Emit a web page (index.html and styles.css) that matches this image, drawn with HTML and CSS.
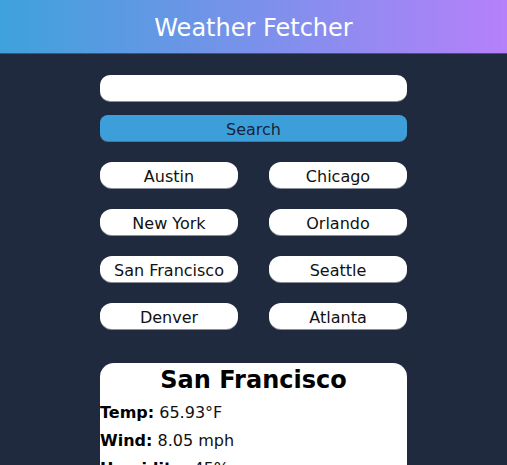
FILE: index.html
```html
<!DOCTYPE html>
<html>
<head>
<meta charset="utf-8">
<link rel="stylesheet" href="styles.css">
</head>
<body>
<header class="top">Weather Fetcher</header>
<main class="col">
  <input class="search-input" type="text">
  <button class="search-btn">Search</button>
  <div class="cities">
    <button class="city">Austin</button>
    <button class="city">Chicago</button>
    <button class="city">New York</button>
    <button class="city">Orlando</button>
    <button class="city">San Francisco</button>
    <button class="city">Seattle</button>
    <button class="city">Denver</button>
    <button class="city">Atlanta</button>
  </div>
  <section class="card">
    <h2 class="card-title">San Francisco</h2>
    <p class="row"><b>Temp:</b> 65.93°F</p>
    <p class="row"><b>Wind:</b> 8.05 mph</p>
    <p class="row"><b>Humidity:</b> 45%</p>
  </section>
</main>
</body>
</html>
```
FILE: styles.css
```css
html, body { margin: 0; padding: 0; }
body {
  background: #1f2a3e;
  font-family: "DejaVu Sans", Verdana, sans-serif;
  overflow: hidden;
}
.top {
  box-sizing: border-box;
  height: 54px;
  padding-top: 2px;
  display: flex;
  align-items: center;
  justify-content: center;
  color: #fff;
  font-size: 24px;
  background: linear-gradient(to right, #3ea2db, #b680fa);
  border-bottom: 1px solid #3b5878;
}
.col {
  width: 307px;
  margin: 21px auto 0;
  display: flex;
  flex-direction: column;
}
.search-input {
  box-sizing: border-box;
  height: 26px;
  border: none;
  border-radius: 10px;
  background: #fff;
  box-shadow: 0 1px 0 #8a8f99;
  margin: 0;
}
.search-btn {
  box-sizing: border-box;
  height: 26px;
  margin-top: 14px;
  border: none;
  border-radius: 8px;
  background: #3d9fda;
  color: #17243a;
  font-family: inherit;
  font-size: 16px;
  padding: 2px 0 0;
  box-shadow: 0 1px 0 #5a6f88;
}
.cities {
  margin-top: 21px;
  display: grid;
  grid-template-columns: 138px 138px;
  column-gap: 31px;
  row-gap: 21px;
}
.city {
  box-sizing: border-box;
  height: 26px;
  border: none;
  border-radius: 12px;
  background: #fff;
  color: #111;
  font-family: inherit;
  font-size: 16px;
  padding: 2px 0 0;
  box-shadow: 0 1px 0 #8a8f99;
}
.card {
  margin-top: 34px;
  background: #fff;
  border-radius: 14px 14px 0 0;
  min-height: 120px;
}
.card-title {
  margin: 0;
  text-align: center;
  font-size: 24px;
  font-weight: bold;
  line-height: 32px;
  padding: 1px 0 3px;
}
.row {
  margin: 0;
  font-size: 16px;
  line-height: 28px;
  color: #111;
}
.row b { color: #000; }
```
